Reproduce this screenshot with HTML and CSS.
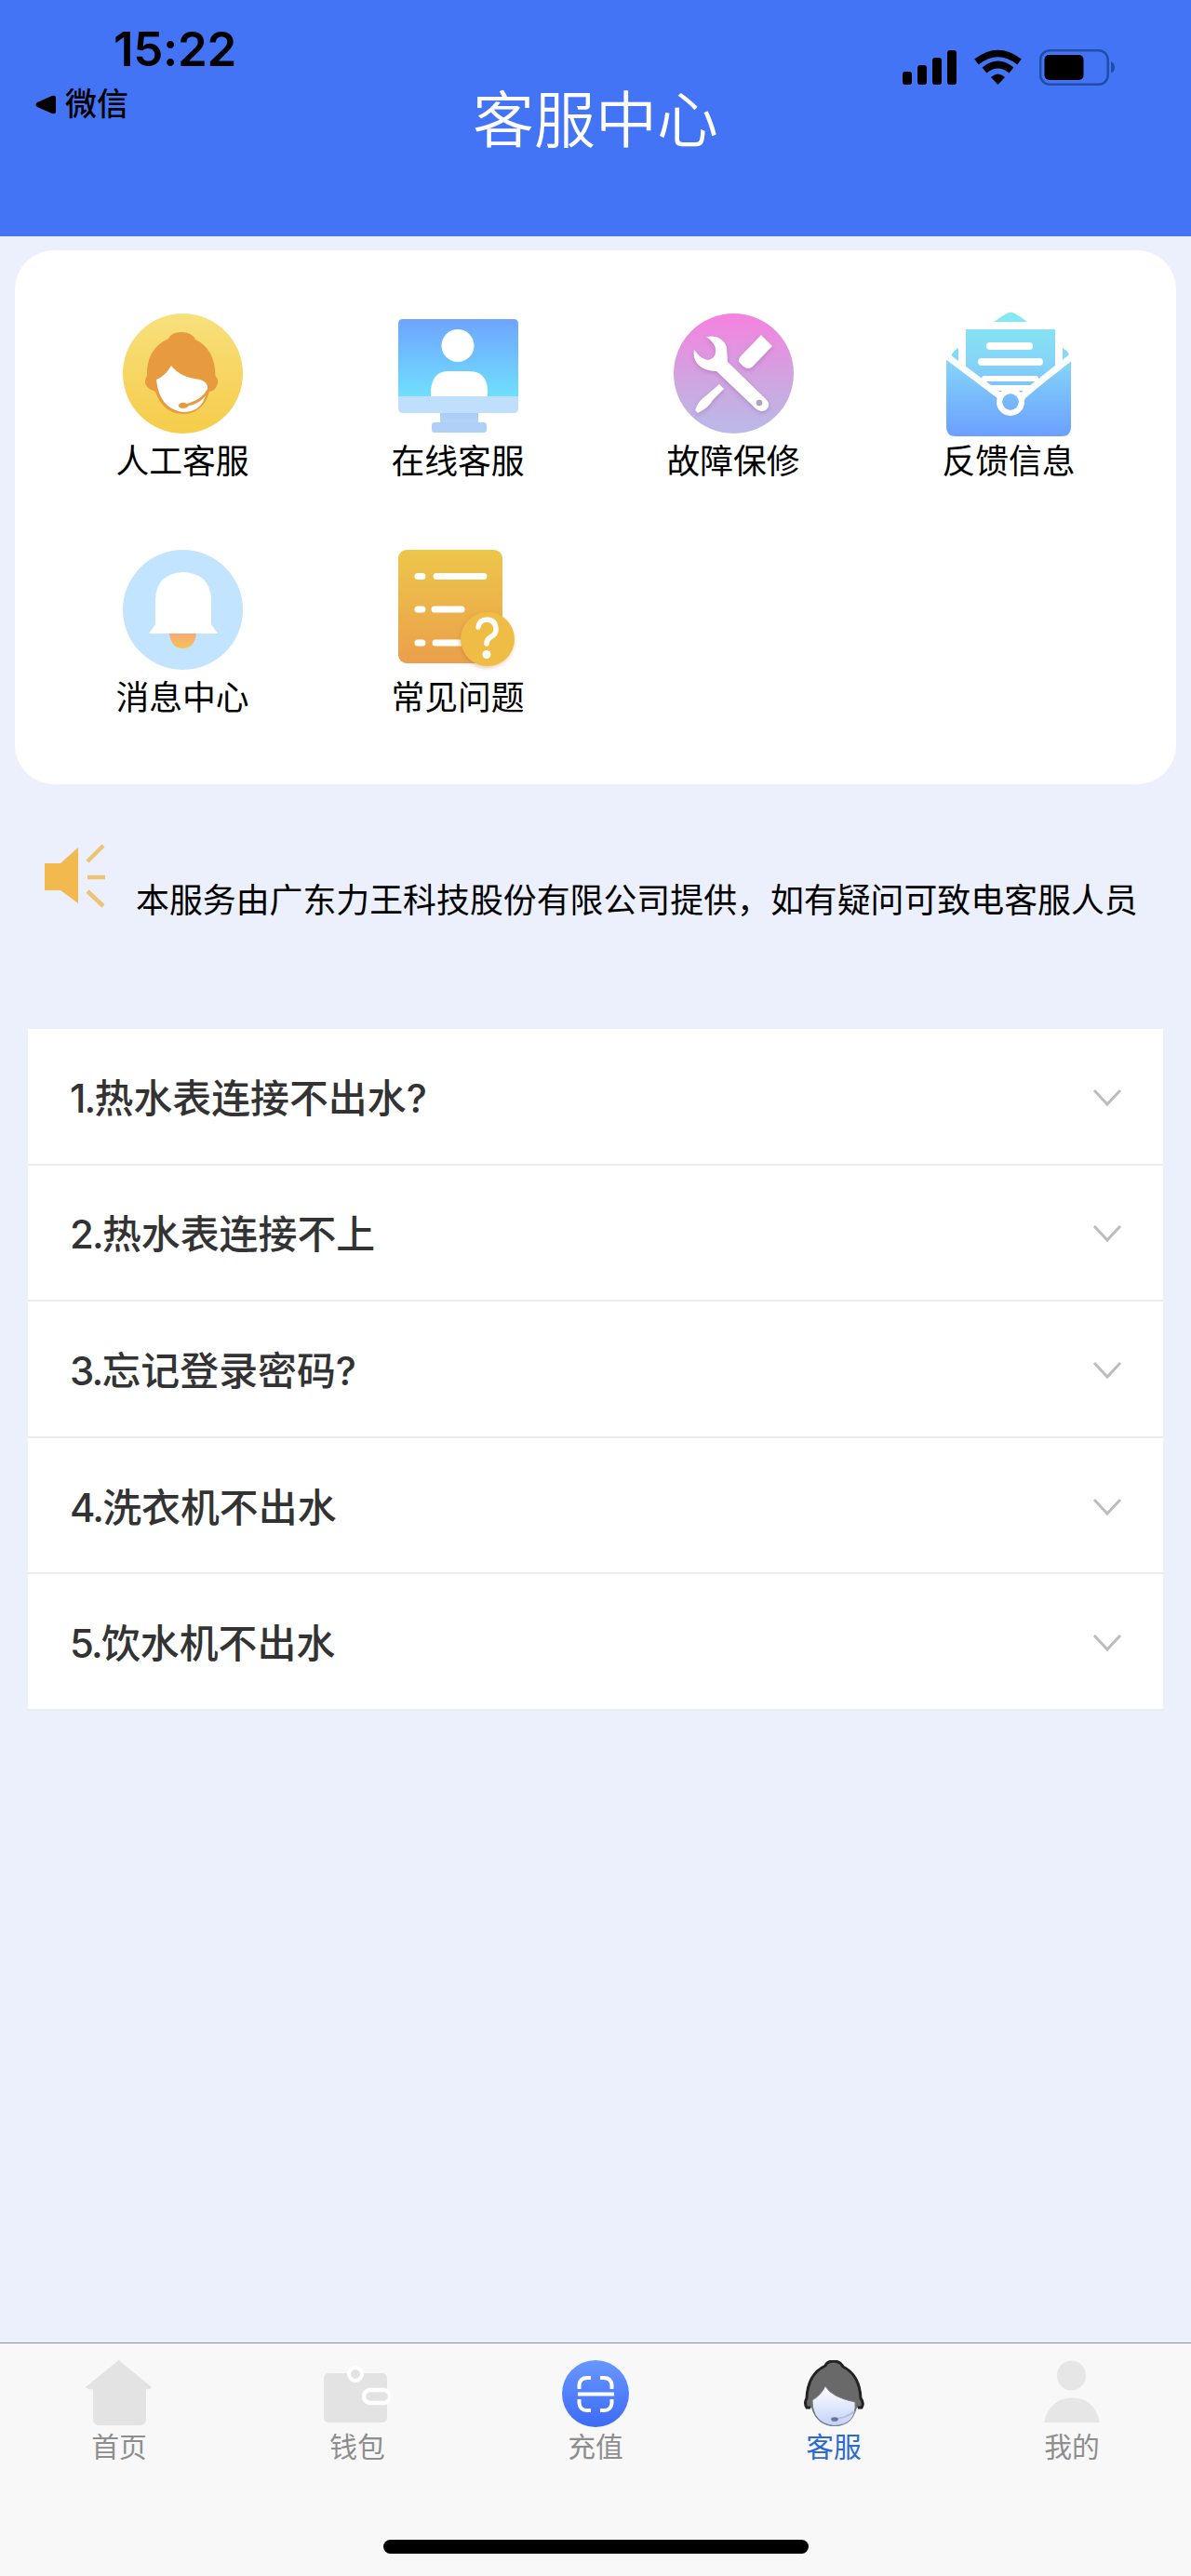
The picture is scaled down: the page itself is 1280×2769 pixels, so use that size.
FILE: index.html
```html
<!DOCTYPE html>
<html lang="zh-CN">
<head>
  <meta charset="UTF-8">
  <title>客服中心</title>
  <link rel="stylesheet" href="styles.css">
</head>
<body>
  <header class="header">
    <div class="status-left">
      <div class="time">15:22</div>
      <div class="back">
        <svg width="22" height="21" viewBox="0 0 22 21"><path d="M18 1 2 8Q-1 10.500 2 13L18 20Q22 21 22 18V3Q22 0 18 1z"/></svg>
        <span>微信</span>
      </div>
    </div>
    <h1 class="title">客服中心</h1>
    <div class="status-right">
      <svg width="230" height="40" viewBox="0 0 230 40">
        <rect x="0" y="24" width="10" height="14" rx="3"/>
        <rect x="16" y="17" width="10" height="21" rx="3"/>
        <rect x="32" y="9" width="10" height="29" rx="3"/>
        <rect x="48" y="1" width="10" height="37" rx="3"/>
        <g fill="none" stroke="#000" stroke-width="7.500">
          <path d="M79.500 13.500Q102.500-4.500 125.500 13.500"/>
          <path d="M88 22.500Q102.500 10.500 117 22.500"/>
        </g>
        <path d="M95 30Q102.500 23 110 30L102.500 38z"/>
        <rect x="148.200" y="1.200" width="72.500" height="36.500" rx="10" fill="none" stroke="#204da6" stroke-width="2.500"/>
        <rect x="152.500" y="6" width="42" height="27" rx="5"/>
        <path d="M224 13q4 2 4 6.500t-4 6z" fill="#204da6"/>
      </svg>
    </div>
  </header>

  <main class="content">
    <section class="menu">
      <a class="menu-item">
        <svg class="menu-icon" viewBox="0 0 144 144">
          <defs>
            <linearGradient id="yellow" x1="0" y1="0" x2="0" y2="1"><stop offset="0" stop-color="#f7e07d"/><stop offset="1" stop-color="#f6cc4a"/></linearGradient>
          </defs>
          <circle cx="72.500" cy="72.500" r="64.500" fill="url(#yellow)"/>
          <path d="M57 35Q60 28 71 28T86 36Q107 46 107.500 75Q112 79 109 86Q107 91 101 92Q94 116 72 116Q51 115 43 92Q34 89 32 83Q32 77 34 75Q33 46 57 35z" fill="#e89b3e"/>
          <path d="M60 64Q70 77 91 79Q100 82 99 89Q94 100 77 105Q71 102 68 106Q67 109 72 110Q77 110 79 107Q91 105 97 96Q92 114 72 114Q47 110 44 79Q54 75 60 64z" fill="#fff"/>
        </svg>
        <span>人工客服</span>
      </a>
      <a class="menu-item">
        <svg class="menu-icon" viewBox="0 0 144 144">
          <defs>
            <linearGradient id="screen" x1="0" y1="0" x2="0" y2="1"><stop offset="0" stop-color="#6ea4ff"/><stop offset="1" stop-color="#70dffc"/></linearGradient>
            <linearGradient id="stand" x1="0" y1="0" x2="0" y2="1"><stop offset="0" stop-color="#a9cdf6"/><stop offset="1" stop-color="#b6d5fa"/></linearGradient>
          </defs>
          <path d="M8 97V19q0-5 5-5H132q5 0 5 5V97z" fill="url(#screen)"/>
          <path d="M8 97H137V110q0 5-5 5H13q-5 0-5-5z" fill="#bfdffc"/>
          <circle cx="72" cy="42.500" r="17.500" fill="#fff"/>
          <path d="M43 97V90Q45 70 62 70H83Q103 70 104 90V97z" fill="#fff"/>
          <path d="M53 115H94V127H53z" fill="url(#stand)"/>
          <rect x="44" y="125" width="59" height="11" rx="3" fill="#b1d0f8"/>
        </svg>
        <span>在线客服</span>
      </a>
      <a class="menu-item">
        <svg class="menu-icon" viewBox="0 0 144 144">
          <defs>
            <linearGradient id="pink" x1="0" y1="0" x2="0" y2="1"><stop offset="0" stop-color="#f681e0"/><stop offset=".6" stop-color="#cda7e0"/><stop offset="1" stop-color="#b9bbe8"/></linearGradient>
          </defs>
          <circle cx="72.500" cy="72.500" r="64.500" fill="url(#pink)"/>
          <g fill="#fff" filter="drop-shadow(0 2px 2px #9b6cae80)">
            <path d="M43 33Q60 30 65 44L66 60L108 101Q113 107 107 112Q101 115 96 110L54 70Q37 70 31 58Q29 53 30 47Q38 58 45 58Q54 56 53 47Q53 40 43 33z"/>
            <path d="M102 31 114 43 93 65Q88 69 83 65L78 60Q77 57 80 54z"/>
            <path d="M57 84 62 89 50 101Q46 109 34 115L31 112Q35 101 42 97z"/>
          </g>
          <circle cx="100" cy="104" r="3.300" fill="#b49fc0"/>
        </svg>
        <span>故障保修</span>
      </a>
      <a class="menu-item">
        <svg class="menu-icon" viewBox="0 0 144 144">
          <defs>
            <linearGradient id="mail" gradientUnits="userSpaceOnUse" x1="0" y1="6" x2="0" y2="140"><stop offset="0" stop-color="#86eaee"/><stop offset=".4" stop-color="#85d5f8"/><stop offset="1" stop-color="#6b9fff"/></linearGradient>
          </defs>
          <g fill="url(#mail)">
            <path d="M56 17Q70 7 74 6.500Q79 7 92 17z"/>
            <path d="M26 25H122V73L104 85H43L26 73z"/>
            <path d="M18 45V65L10 59Q9 50 18 45zM130 45V65L138 59Q139 50 130 45z"/>
            <path d="M5 57 60 99Q64 118 74 117T90 99L139 57V130q0 10-10 10H15q-10 0-10-10z"/>
            <path d="M54 91H94L84 97Q75 90 64 97z"/>
            <circle cx="74" cy="103" r="9"/>
          </g>
          <g fill="none" stroke="#fff" stroke-linecap="round">
            <path d="M52 43H94M43 60H105" stroke-width="8"/>
            <path d="M46 78H101" stroke-width="6"/>
            <path d="M7 55 62 96M139 55 87 96" stroke-width="7"/>
            <circle cx="74" cy="103" r="12" stroke-width="6"/>
          </g>
        </svg>
        <span>反馈信息</span>
      </a>
      <a class="menu-item">
        <svg class="menu-icon" viewBox="0 0 144 144">
          <defs>
            <linearGradient id="clapper" x1="0" y1="0" x2="0" y2="1"><stop offset="0" stop-color="#f8a779"/><stop offset="1" stop-color="#f6c553"/></linearGradient>
          </defs>
          <circle cx="72.500" cy="72.500" r="64.500" fill="#c3e4fe"/>
          <path d="M43 88V60Q45 33 73 32Q101 33 103 60V88L110 98H36z" fill="#fff"/>
          <path d="M58 98H87Q85 114 72.500 114T58 98z" fill="url(#clapper)"/>
        </svg>
        <span>消息中心</span>
      </a>
      <a class="menu-item">
        <svg class="menu-icon" viewBox="0 0 144 144">
          <defs>
            <linearGradient id="paper" x1="0" y1="0" x2="0" y2="1"><stop offset="0" stop-color="#edc64a"/><stop offset="1" stop-color="#eba04b"/></linearGradient>
          </defs>
          <rect x="8" y="8" width="112" height="122" rx="9" fill="url(#paper)"/>
          <path d="M29 36.500H34M49 36.500H100M29 72H34M47 72H76M29 108H34M48 108H76" stroke="#fff" stroke-width="7" stroke-linecap="round"/>
          <circle cx="104" cy="104" r="29" fill="#efbd45" filter="drop-shadow(-1px 2px 2px #b9783566)"/>
          <path d="M94 91Q95 83 104 83Q113 84 113 94Q113 99 107 102Q103 104 103 109" fill="none" stroke="#fff" stroke-width="5.500" stroke-linecap="round"/>
          <circle cx="103" cy="120.500" r="4.500" fill="#fff"/>
        </svg>
        <span>常见问题</span>
      </a>
    </section>

    <section class="notice">
      <svg width="68" height="70" viewBox="0 0 68 70">
        <path d="M1 21H18L37 4V64L18 50H1z" fill="#f2b94f"/>
        <path d="M47 19 64 2M47 36H66M47 51 64 67" stroke="#ecc476" stroke-width="4.500"/>
      </svg>
      <p>本服务由广东力王科技股份有限公司提供，如有疑问可致电客服人员</p>
    </section>

    <section class="faq">
      <div class="faq-item">
        <span><span class="num">1.</span>热水表连接不出水?</span>
        <svg class="arrow" viewBox="0 0 32 20"><path d="M2 2 16 17 30 2"/></svg>
      </div>
      <div class="faq-item">
        <span><span class="num">2.</span>热水表连接不上</span>
        <svg class="arrow" viewBox="0 0 32 20"><path d="M2 2 16 17 30 2"/></svg>
      </div>
      <div class="faq-item">
        <span><span class="num">3.</span>忘记登录密码?</span>
        <svg class="arrow" viewBox="0 0 32 20"><path d="M2 2 16 17 30 2"/></svg>
      </div>
      <div class="faq-item">
        <span><span class="num">4.</span>洗衣机不出水</span>
        <svg class="arrow" viewBox="0 0 32 20"><path d="M2 2 16 17 30 2"/></svg>
      </div>
      <div class="faq-item">
        <span><span class="num">5.</span>饮水机不出水</span>
        <svg class="arrow" viewBox="0 0 32 20"><path d="M2 2 16 17 30 2"/></svg>
      </div>
    </section>
  </main>

  <footer class="footer">
    <nav class="tabbar">
      <a class="tab">
        <svg class="tab-icon" viewBox="0 0 72 72"><path d="M35.500 0 71 29Q70 32 65 31V64Q64 70 58 70H15Q9 70 8 64V31Q2 32 0 29z" fill="#e3e3e3"/></svg>
        <span>首页</span>
      </a>
      <a class="tab">
        <svg class="tab-icon" viewBox="0 0 72 72">
          <rect x="0" y="14" width="68" height="53" rx="5" fill="#e3e3e3"/>
          <rect x="27" y="8" width="14" height="14" rx="7" fill="#e3e3e3" stroke="#fff" stroke-width="4"/>
          <rect x="43" y="32" width="28" height="14" rx="7" fill="#e3e3e3" stroke="#fff" stroke-width="4.500"/>
        </svg>
        <span>钱包</span>
      </a>
      <a class="tab">
        <svg class="tab-icon" viewBox="0 0 72 72">
          <defs>
            <linearGradient id="scan" x1="0" y1="0" x2="0" y2="1"><stop offset="0" stop-color="#6997ff"/><stop offset="1" stop-color="#3c6bf7"/></linearGradient>
          </defs>
          <circle cx="36" cy="36" r="36" fill="url(#scan)"/>
          <path d="M18.500 31V27Q19 19 27 19H31M41 19H45Q53 19 53.500 27V31M18.500 42V46Q19 54 27 54H31M41 54H45Q53 54 53.500 46V42M17 36.500H56" fill="none" stroke="#fff" stroke-width="4"/>
        </svg>
        <span>充值</span>
      </a>
      <a class="tab active">
        <svg class="tab-icon" viewBox="0 0 72 72">
          <defs>
            <linearGradient id="face" x1="0" y1="0" x2="0" y2="1"><stop offset="0" stop-color="#fff"/><stop offset="1" stop-color="#c3d2f8"/></linearGradient>
          </defs>
          <path d="M27 6Q29 1 36 1T46 7Q64 16 65 41Q69 46 66 51H61Q55 71 37 71Q18 71 12 51H7Q4 46 7 41Q8 15 27 6z" fill="#696969"/>
          <path d="M11 51H7Q4 46 7 41Q8 15 27 6Q29 1 36 1T46 7Q64 16 65 41Q69 46 66 51H62" fill="none" stroke="#222" stroke-width="3"/>
          <path d="M27 28Q34 40 59 45Q61 70 36 70.500Q13 68 13 43Q22 38 27 28z" fill="url(#face)" stroke="#777f94" stroke-width="1"/>
          <path d="M58 55Q50 62 38 63" fill="none" stroke="#b7bfe0" stroke-width="2"/>
          <ellipse cx="37" cy="63.500" rx="3.800" ry="2.300" fill="#6d7296"/>
        </svg>
        <span>客服</span>
      </a>
      <a class="tab">
        <svg class="tab-icon" viewBox="0 0 72 72">
          <ellipse cx="35.500" cy="16.500" rx="15.500" ry="16" fill="#e6e6e6"/>
          <path d="M6 67Q12 41 36 40.500T66 67z" fill="#e6e6e6"/>
        </svg>
        <span>我的</span>
      </a>
    </nav>
    <div class="home-indicator"></div>
  </footer>
</body>
</html>
```
FILE: styles.css
```css
* {
  box-sizing: border-box;
}

body {
  margin: 0;
  min-height: 2769px;
  display: flex;
  flex-direction: column;
  background: #ecf0fd;
  color: #000;
  font-family: Inter, "Noto Sans CJK SC", sans-serif;
}

svg {
  display: block;
  flex-shrink: 0;
}

.header {
  height: 254px;
  display: grid;
  grid-template-columns: 1fr 264px 1fr;
  background: #4474f6;
}

.status-left {
  padding-top: 22px;
}

.time {
  padding-left: 122px;
  font-size: 51px;
  font-weight: 600;
  line-height: 62px;
  letter-spacing: -0.3px;
}

.back {
  display: flex;
  align-items: center;
  gap: 10px;
  padding-left: 38px;
  margin-top: 8px;
  font-size: 34px;
  font-weight: 500;
  line-height: 40px;
}

.title {
  margin: 0;
  padding-top: 89px;
  text-align: center;
  color: #fff;
  font-size: 66px;
  font-weight: 350;
  line-height: 80px;
}

.status-right {
  display: flex;
  justify-content: flex-end;
  padding: 53px 80px 0 0;
}

.content {
  flex: 1;
}

.menu {
  height: 574px;
  margin: 15px 16px 0;
  padding: 60px 32px 0;
  display: grid;
  grid-template-columns: repeat(4, 1fr);
  grid-auto-rows: 254px;
  background: #fff;
  border-radius: 42px;
}

.menu-item {
  display: flex;
  flex-direction: column;
  align-items: center;
  font-size: 35.800px;
  line-height: 46px;
}

.menu-icon {
  width: 144px;
  height: 144px;
}

.notice {
  height: 263px;
  display: flex;
  align-items: flex-start;
  gap: 31px;
  padding: 64px 47px 0;
}

.notice p {
  margin: 38px 0 0;
  font-size: 35.900px;
  line-height: 46px;
  white-space: nowrap;
}

.faq {
  margin: 0 30px;
}

.faq-item {
  height: 146.600px;
  display: flex;
  align-items: center;
  justify-content: space-between;
  padding: 0 44px 2px 45px;
  background: #fff;
  border-bottom: 2px solid #e9ecf1;
  color: #333;
  font-size: 41.900px;
  font-weight: 500;
}

.num {
  letter-spacing: -1.800px;
}

.arrow {
  width: 32px;
  height: 20px;
  margin-top: 5px;
  fill: none;
  stroke: #bdbdbd;
  stroke-width: 3;
}

.footer {
  height: 251px;
  background: #f8f8f8;
  border-top: 1px solid #8d93a5;
}

.tabbar {
  height: 211px;
  display: flex;
}

.tab {
  flex: 1;
  display: flex;
  flex-direction: column;
  align-items: center;
  gap: 1px;
  padding-top: 18px;
  color: #8e8e8e;
  font-size: 29.800px;
  line-height: 40px;
}

.tab-icon {
  width: 72px;
  height: 72px;
}

.tab.active {
  color: #2b69d3;
}

.home-indicator {
  width: 457px;
  height: 15px;
  margin: 0 auto;
  background: #000;
  border-radius: 8px;
}
```
